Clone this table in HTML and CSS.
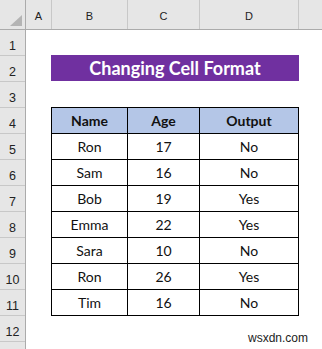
FILE: index.html
```html
<!DOCTYPE html>
<html>
<head>
<meta charset="utf-8">
<link rel="stylesheet" href="styles.css">
</head>
<body>
<div class="sheet">
  <div class="colhdr">
    <div class="hc corner"><span class="tri"></span></div>
    <div class="hc ca">A</div>
    <div class="hc cb">B</div>
    <div class="hc cc">C</div>
    <div class="hc cd">D</div>
    <div class="hc ce"></div>
  </div>
  <div class="main">
    <div class="rowhdr">
      <div class="rh">1</div>
      <div class="rh">2</div>
      <div class="rh">3</div>
      <div class="rh">4</div>
      <div class="rh">5</div>
      <div class="rh">6</div>
      <div class="rh">7</div>
      <div class="rh">8</div>
      <div class="rh">9</div>
      <div class="rh">10</div>
      <div class="rh">11</div>
      <div class="rh">12</div>
      <div class="rh"></div>
    </div>
    <div class="body">
      <div class="title">Changing Cell Format</div>
      <div class="table">
        <div class="cell th">Name</div><div class="cell th">Age</div><div class="cell th">Output</div>
        <div class="cell">Ron</div><div class="cell">17</div><div class="cell">No</div>
        <div class="cell">Sam</div><div class="cell">16</div><div class="cell">No</div>
        <div class="cell">Bob</div><div class="cell">19</div><div class="cell">Yes</div>
        <div class="cell">Emma</div><div class="cell">22</div><div class="cell">Yes</div>
        <div class="cell">Sara</div><div class="cell">10</div><div class="cell">No</div>
        <div class="cell">Ron</div><div class="cell">26</div><div class="cell">Yes</div>
        <div class="cell">Tim</div><div class="cell">16</div><div class="cell">No</div>
      </div>
    </div>
  </div>
  <div class="watermark">wsxdn.com</div>
</div>
</body>
</html>
```

FILE: styles.css
```css
* { box-sizing: border-box; }
html, body {
  margin: 0;
  padding: 0;
  background: #ffffff;
}
.sheet {
  position: relative;
  width: 322px;
  height: 349px;
  overflow: hidden;
  display: flex;
  flex-direction: column;
}
.colhdr {
  display: flex;
  height: 30px;
  flex: none;
  background: #e6e6e6;
  border-bottom: 1px solid #ababab;
}
.hc {
  height: 29px;
  border-right: 1px solid #c8c8c8;
  padding-top: 10px;
  font-family: "Liberation Sans", Arial, sans-serif;
  font-size: 11px;
  color: #222;
  text-align: center;
  line-height: 13px;
  flex: none;
}
.corner {
  width: 26px;
  border-right-color: #ababab;
  position: relative;
}
.tri {
  position: absolute;
  left: 10px;
  top: 15px;
  width: 0;
  height: 0;
  border-left: 12px solid transparent;
  border-bottom: 11px solid #b4b4b4;
}
.ca { width: 26px; }
.cb { width: 76px; }
.cc { width: 72px; }
.cd { width: 99px; }
.ce { flex: 1; border-right: none; }
.main {
  display: flex;
  flex: 1;
}
.rowhdr {
  width: 26px;
  flex: none;
  background: #e6e6e6;
  border-right: 1px solid #ababab;
}
.rh {
  height: 26px;
  border-bottom: 1px solid #c8c8c8;
  padding-top: 9px;
  font-family: "Liberation Sans", Arial, sans-serif;
  font-size: 12.5px;
  line-height: 14px;
  color: #222;
  text-align: center;
}
.body {
  flex: 1;
  padding-left: 25px;
  padding-top: 25px;
}
.title {
  width: 248px;
  height: 26px;
  background: #7030a0;
  color: #ffffff;
  font-family: Lato, "Open Sans", sans-serif;
  font-weight: 700;
  font-size: 18px;
  line-height: 26px;
  text-align: center;
}
.table {
  margin-top: 26px;
  width: 248px;
  display: grid;
  grid-template-columns: 76px 72px 99px;
  border-left: 1px solid #000;
  border-top: 1px solid #000;
}
.cell {
  height: 26px;
  border-right: 1px solid #000;
  border-bottom: 1px solid #000;
  font-family: Lato, "Open Sans", sans-serif;
  font-size: 14px;
  line-height: 25px;
  text-align: center;
  color: #111;
}
.th {
  background: #b4c6e7;
  font-weight: 700;
}
.watermark {
  position: absolute;
  left: 248px;
  top: 331px;
  font-family: "Liberation Sans", Arial, sans-serif;
  font-size: 12px;
  line-height: 14px;
  color: #222;
}
```
